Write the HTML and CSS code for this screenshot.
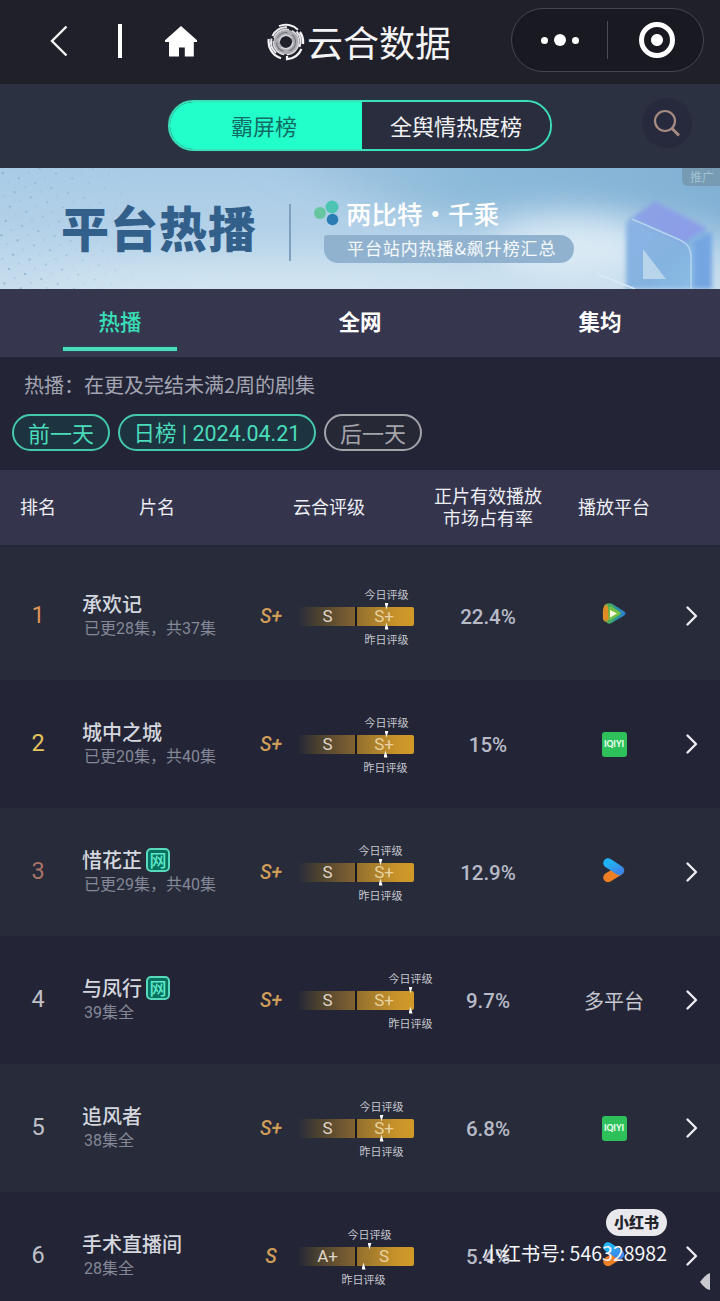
FILE: index.html
```html
<!DOCTYPE html>
<html lang="zh-CN">
<head>
<meta charset="utf-8">
<title>云合数据</title>
<link rel="stylesheet" href="styles.css">
</head>
<body>
<svg class="defs" width="0" height="0">
  <defs>
    <linearGradient id="blueArm" x1="0" y1="0" x2="1" y2="1"><stop offset="0" stop-color="#20b4f5"/><stop offset="1" stop-color="#3c88e8"/></linearGradient>
    <linearGradient id="txEdge" x1="0" y1="0" x2="1" y2="0"><stop offset="0" stop-color="#e99a26"/><stop offset=".25" stop-color="#4fae55"/><stop offset=".6" stop-color="#2a93a0"/><stop offset="1" stop-color="#2b7fd0"/></linearGradient>
    <symbol id="arrow" viewBox="0 0 12 20"><path d="M1.500 1.500 10 10 1.500 18.500" fill="none" stroke="#eeeef2" stroke-width="2.300" stroke-linecap="round" stroke-linejoin="round"/></symbol>
    <symbol id="tencent" viewBox="0 0 26 24">
      <path d="M3 4Q4 1 7.500 1.500Q9 .8 11 1.800L23 9.300Q26 11.500 23 13.700L10 21.300Q7 22.600 5.500 20Q3 20 2 17Q1 10 3 4Z" fill="url(#txEdge)"/>
      <path d="M3 5Q5 2 7 5L8 17Q6 20 3 18Q1 11 3 5Z" fill="#e18b25"/>
      <path d="M8 5Q9.500 3.500 11.500 5L19 10Q20.500 11.500 19 12.800L10 18Q8 18.500 7.500 16Z" fill="#72c043"/>
      <path d="M9 8 16 11.500 9 15.500Z" fill="#fffbe2"/>
    </symbol>
    <symbol id="youku" viewBox="0 0 24 26">
      <path d="M6 20.500 16.500 14" stroke="#ee7f25" stroke-width="9.500" stroke-linecap="round"/>
      <path d="M6 6 17.500 13.500" stroke="url(#blueArm)" stroke-width="9.500" stroke-linecap="round"/>
    </symbol>
  </defs>
</svg>
<main class="page">
  <header class="navbar">
    <svg class="nav-back" width="18" height="32" viewBox="0 0 18 32"><path d="M16.500 1.500 2 16 16.500 30.500" fill="none" stroke="#f4f4f6" stroke-width="2.400"/></svg>
    <span class="nav-rule"></span>
    <svg class="nav-home" width="34" height="32" viewBox="0 0 34 32"><path d="M17 1 33 15.200V17H29.800V31.500H20.800V22.500H15V31.500H5V17H1V15.200Z" fill="#fff"/></svg>
    <div class="brand">
      <svg width="38" height="38" viewBox="0 0 38 38" fill="none">
        <circle cx="19" cy="19" r="9.300" stroke="#aaaab0" stroke-width="6.500"/>
        <circle cx="19" cy="19" r="12.800" stroke="#dedee2" stroke-width="1.400" stroke-dasharray="19 3"/>
        <circle cx="19" cy="19" r="9.500" stroke="#75757d" stroke-width="1.100" stroke-dasharray="12 5"/>
        <circle cx="19" cy="19" r="6.800" stroke="#d5d5d9" stroke-width="1.400" stroke-dasharray="16 6"/>
        <path d="M12 3.200A17.300 17.300 0 0 1 31 6.700" stroke="#f4f4f6" stroke-width="1.900"/>
        <path d="M33 9A17.300 17.300 0 0 1 36 21M34.500 26A17.300 17.300 0 0 1 20 36.200V33M14 35.300A17.300 17.300 0 0 1 1.800 16" stroke="#f4f4f6" stroke-width="2.200"/>
        <path d="M4.500 15.500A14.800 14.800 0 0 0 9 30M29.500 8.500A14.800 14.800 0 0 1 32.500 24M5.500 13A14.800 14.800 0 0 1 20 4.200" stroke="#e8e8ec" stroke-width="2"/>
      </svg>
      <span>云合数据</span>
    </div>
    <div class="capsule">
      <span class="dots"><i></i><i></i><i></i></span>
      <span class="capsule-rule"></span>
      <span class="target"></span>
    </div>
  </header>

  <section class="toolbar">
    <div class="segment"><span class="seg-on">霸屏榜</span><span class="seg-off">全舆情热度榜</span></div>
    <span class="search"><svg width="28" height="28" viewBox="0 0 28 28" fill="none" stroke="#a58b80" stroke-width="2.200"><circle cx="12" cy="12" r="10"/><path d="M19 19.500 26 26.500" stroke-width="3"/></svg></span>
  </section>

  <section class="banner">
    <svg class="banner-art" width="720" height="121" viewBox="0 0 720 121">
      <defs>
        <linearGradient id="sky" x1="0" y1="0" x2="0" y2="1"><stop offset="0" stop-color="#a9cbe6"/><stop offset=".5" stop-color="#b3d1e8"/><stop offset="1" stop-color="#c8deee"/></linearGradient>
        <linearGradient id="dusk" x1="0" y1="0" x2="1" y2="0"><stop offset="0" stop-color="#84b5d5" stop-opacity="0"/><stop offset=".45" stop-color="#84b5d5" stop-opacity=".8"/><stop offset="1" stop-color="#80afd4"/></linearGradient>
        <linearGradient id="cubeTop" x1="0" y1="0" x2="1" y2="1"><stop offset="0" stop-color="#8ba2e4"/><stop offset="1" stop-color="#8b9ce8"/></linearGradient>
        <linearGradient id="cubeFace" x1="0" y1="0" x2="1" y2="1"><stop offset="0" stop-color="#8db3e4"/><stop offset=".6" stop-color="#84b3e0"/><stop offset="1" stop-color="#8cc0e6"/></linearGradient>
        <filter id="soft" x="-30%" y="-80%" width="160%" height="260%"><feGaussianBlur stdDeviation="16"/></filter>
        <filter id="edge"><feGaussianBlur stdDeviation="2"/></filter>
        <pattern id="specks" width="17" height="15" patternUnits="userSpaceOnUse" patternTransform="rotate(17)"><circle cx="4" cy="4" r="1" fill="#7fa8ca"/><circle cx="12" cy="11" r=".8" fill="#90b5d4"/></pattern>
        <linearGradient id="fade"><stop offset="0" stop-color="#fff"/><stop offset="1" stop-color="#fff" stop-opacity="0"/></linearGradient>
        <mask id="speckMask"><rect width="150" height="121" fill="url(#fade)"/></mask>
      </defs>
      <rect width="720" height="121" fill="url(#sky)"/>
      <path d="M230 -30H760V75Q600 25 500 45Q390 60 230 -30Z" fill="url(#dusk)" filter="url(#soft)"/>
      <ellipse cx="570" cy="82" rx="80" ry="28" fill="#dcebf5" filter="url(#soft)"/>
      <ellipse cx="280" cy="118" rx="240" ry="18" fill="#d2e5f1" filter="url(#soft)"/>
      <rect width="150" height="121" fill="url(#specks)" mask="url(#speckMask)"/>
      <g filter="url(#edge)">
        <path d="M630 50 655 34 707 61V121H626V55Z" fill="url(#cubeFace)"/>
        <path d="M632 50 655 33 707 60 684 75Z" fill="url(#cubeTop)"/>
        <path d="M694 74 712 63V121H694Z" fill="#76a6e2"/>
      </g>
      <path d="M632 51 680 72Q691 77 691 88V121" fill="none" stroke="#b4d4ef" stroke-width="1.500"/>
      <path d="M643 81 666 111H643Z" fill="#b7d4eb"/>
      <path d="M598 106 635 121" stroke="#d9ebf5" stroke-width="1.500"/>
    </svg>
    <strong class="banner-title">平台热播</strong>
    <span class="banner-rule"></span>
    <div class="banner-side">
      <div class="banner-brand">
        <svg width="25" height="26" viewBox="0 0 25 26"><circle cx="18" cy="7" r="6.500" fill="#4dc5b2"/><circle cx="6" cy="13" r="6" fill="#65c6a0"/><circle cx="18.500" cy="19.500" r="5.800" fill="#2a7bb4"/></svg>
        <span>两比特·千乘</span>
      </div>
      <span class="banner-sub">平台站内热播&amp;飙升榜汇总</span>
    </div>
    <span class="ad-tag">推广</span>
  </section>

  <nav class="tabs"><span class="tab tab-on">热播</span><span class="tab">全网</span><span class="tab">集均</span></nav>

  <section class="filters">
    <p class="hint">热播：在更及完结未满2周的剧集</p>
    <div class="days"><span class="pill pill-day">前一天</span><span class="pill pill-date">日榜 | 2024.04.21</span><span class="pill pill-day pill-off">后一天</span></div>
  </section>

  <div class="thead"><span>排名</span><span>片名</span><span>云合评级</span><span>正片有效播放<br>市场占有率</span><span>播放平台</span></div>

  <section class="rows">
    <article class="row">
      <span class="rank rank-1">1</span>
      <div class="show"><div class="name">承欢记</div><div class="sub">已更28集，共37集</div></div>
      <span class="grade">S+</span>
      <div class="bar"><span class="low">S</span><span class="high">S+</span><span class="mark today" style="left:89.500px">今日评级</span><span class="mark prev" style="left:89.500px">昨日评级</span></div>
      <span class="share">22.4%</span>
      <span class="platform"><svg width="26" height="24"><use href="#tencent"/></svg></span>
      <svg class="go" width="12" height="20"><use href="#arrow"/></svg>
    </article>
    <article class="row">
      <span class="rank rank-2">2</span>
      <div class="show"><div class="name">城中之城</div><div class="sub">已更20集，共40集</div></div>
      <span class="grade">S+</span>
      <div class="bar"><span class="low">S</span><span class="high">S+</span><span class="mark today" style="left:89.500px">今日评级</span><span class="mark prev" style="left:88.500px">昨日评级</span></div>
      <span class="share">15%</span>
      <span class="platform"><b class="iqiyi">IQIYI</b></span>
      <svg class="go" width="12" height="20"><use href="#arrow"/></svg>
    </article>
    <article class="row">
      <span class="rank rank-3">3</span>
      <div class="show"><div class="name">惜花芷<em>网</em></div><div class="sub">已更29集，共40集</div></div>
      <span class="grade">S+</span>
      <div class="bar"><span class="low">S</span><span class="high">S+</span><span class="mark today" style="left:83.500px">今日评级</span><span class="mark prev" style="left:83.500px">昨日评级</span></div>
      <span class="share">12.9%</span>
      <span class="platform"><svg width="24" height="26"><use href="#youku"/></svg></span>
      <svg class="go" width="12" height="20"><use href="#arrow"/></svg>
    </article>
    <article class="row">
      <span class="rank">4</span>
      <div class="show"><div class="name">与凤行<em>网</em></div><div class="sub">39集全</div></div>
      <span class="grade">S+</span>
      <div class="bar"><span class="low">S</span><span class="high">S+</span><span class="mark today" style="left:113.500px">今日评级</span><span class="mark prev" style="left:113.500px">昨日评级</span></div>
      <span class="share">9.7%</span>
      <span class="platform">多平台</span>
      <svg class="go" width="12" height="20"><use href="#arrow"/></svg>
    </article>
    <article class="row">
      <span class="rank">5</span>
      <div class="show"><div class="name">追风者</div><div class="sub">38集全</div></div>
      <span class="grade">S+</span>
      <div class="bar"><span class="low">S</span><span class="high">S+</span><span class="mark today" style="left:84.500px">今日评级</span><span class="mark prev" style="left:84.500px">昨日评级</span></div>
      <span class="share">6.8%</span>
      <span class="platform"><b class="iqiyi">IQIYI</b></span>
      <svg class="go" width="12" height="20"><use href="#arrow"/></svg>
    </article>
    <article class="row">
      <span class="rank">6</span>
      <div class="show"><div class="name">手术直播间</div><div class="sub">28集全</div></div>
      <span class="grade">S</span>
      <div class="bar"><span class="low">A+</span><span class="high">S</span><span class="mark today" style="left:72.500px">今日评级</span><span class="mark prev" style="left:66.500px">昨日评级</span></div>
      <span class="share">5.4%</span>
      <span class="platform"><svg width="24" height="26"><use href="#youku"/></svg></span>
      <svg class="go" width="12" height="20"><use href="#arrow"/></svg>
    </article>
  </section>

  <aside class="watermark"><b>小红书</b><span>小红书号: 546328982</span></aside>
  <svg class="corner" width="10" height="17" viewBox="0 0 10 17"><path d="M10 0V17Q5 16 0 9Q5 2 10 0Z" fill="#c9c9cf"/></svg>
</main>
</body>
</html>
```
FILE: styles.css
```css
* { box-sizing: border-box; }
body { margin: 0; background: #232536; font-family: "Noto Sans CJK SC", sans-serif; color: #d6d7df; }
.defs { position: absolute; }
.page { position: relative; width: 720px; height: 1301px; overflow: hidden; }

.navbar { display: flex; align-items: flex-start; height: 84px; background: #20202a; }
.nav-back { margin: 25px 0 0 50px; }
.nav-rule { width: 4px; height: 34px; margin: 24px 0 0 50px; background: #fff; }
.nav-home { margin: 25px 0 0 42px; }
.brand { display: flex; align-items: center; gap: 2px; height: 60px; margin: 11px 0 0 69px; font-size: 36px; color: #f4f4f6; }
.brand svg { margin-top: 1px; }
.brand span { width: 143px; white-space: nowrap; line-height: 60px; }
.capsule { display: flex; align-items: center; width: 193px; height: 64px; margin: 8px 0 0 61px; border: 1px solid #454650; border-radius: 32px; background: #181921; }
.dots { display: flex; align-items: center; gap: 6px; margin-left: 29px; }
.dots i { width: 7px; height: 7px; border-radius: 50%; background: #fff; }
.dots i:nth-child(2) { width: 12px; height: 12px; }
.capsule-rule { width: 1px; height: 38px; margin-left: 28px; background: #4b4c55; }
.target { width: 36px; height: 36px; margin-left: 31px; border: 5px solid #fff; border-radius: 50%; background: radial-gradient(circle, #fff 5.5px, transparent 6.5px); }

.toolbar { display: flex; align-items: flex-start; height: 84px; background: #2c3142; }
.segment { display: flex; width: 384px; height: 51px; margin: 16px 0 0 168px; border: 2px solid #3cdfb8; border-radius: 26px; overflow: hidden; font-size: 22px; line-height: 46px; text-align: center; box-shadow: 0 0 2px #125a50; }
.seg-on { width: 192px; padding-right: 4px; background: #22ffcb; color: #126c64; }
.seg-off { flex: 1; color: #f1f2f5; background: #292d3d; }
.search { display: flex; align-items: center; justify-content: center; width: 50px; height: 50px; margin: 14px 0 0 90px; border-radius: 50%; background: #262a3c; }

.banner { position: relative; display: flex; height: 121px; overflow: hidden; background: #b4d1e7; }
.banner-art { position: absolute; inset: 0; }
.banner-title { position: relative; width: 200px; margin: 28px 0 0 61px; font-size: 48px; line-height: 60px; letter-spacing: 1px; font-weight: 900; color: #335f8b; white-space: nowrap; }
.banner-rule { position: relative; width: 2px; height: 57px; margin: 36px 0 0 28px; background: #7e9fbd; }
.banner-side { position: relative; margin: 28px 0 0 23px; }
.banner-brand { display: flex; align-items: center; gap: 7px; height: 33px; font-size: 25.5px; line-height: 32px; font-weight: 500; color: #fff; white-space: nowrap; }
.banner-sub { display: block; width: 250px; height: 28px; margin: 6px 0 0 10px; padding-left: 23px; border-radius: 3px 14px 14px 14px; background: #91b2ce; color: #f6fafc; font-size: 17px; line-height: 26px; letter-spacing: .9px; white-space: nowrap; }
.ad-tag { position: absolute; right: 0; top: 0; width: 38px; height: 18px; padding-left: 8px; border-radius: 0 0 0 6px; background: #779bb3; color: #a2c2d2; font-size: 12px; line-height: 18px; }

.tabs { display: grid; grid-template-columns: repeat(3, 1fr); height: 68px; background: #37364f; }
.tab { display: flex; flex-direction: column; align-items: center; color: #fff; font-size: 21.5px; font-weight: 700; line-height: 64px; }
.tab-on { color: #38dfb6; font-weight: 500; }
.tab-on::after { content: ""; width: 114px; height: 4px; margin-top: -6px; background: #4bdcbd; box-shadow: 0 0 2px #00735d; }

.filters { height: 113px; padding: 14px 0 0 12px; background: #232536; }
.hint { margin: 0 0 0 12px; font-size: 20px; line-height: 28px; color: #a3a4b1; }
.days { display: flex; gap: 8px; margin-top: 15px; }
.pill { height: 37px; border: 2px solid #43c8aa; border-radius: 19px; background: #1d3440; color: #4bdcbb; text-align: center; font-size: 22px; line-height: 32px; white-space: nowrap; }
.pill-day { width: 98px; }
.pill-date { width: 198px; font-family: Roboto, "Noto Sans CJK SC", sans-serif; font-size: 21.5px; line-height: 35px; }
.pill-off { border-color: #a3a3aa; background: #272836; color: #a5a5ac; }

.thead { display: grid; grid-template-columns: 76px 162px 182px 136px 116px; align-items: center; height: 77px; padding-bottom: 3px; background: #34354d; border-bottom: 2px solid #222838; color: #eeeef5; font-size: 18px; line-height: 22px; text-align: center; }

.rows { margin-top: 5px; }
.row { display: grid; grid-template-columns: 76px 169px 52px 117px 148px 104px 50px; align-items: center; height: 128px; background: #232536; }
.row:nth-child(odd) { background: #272b3a; }
.row:first-child { box-shadow: 0 -5px #272b3a; }
.rank, .grade, .share, .low, .high, .sub { font-family: Roboto, "Noto Sans CJK SC", sans-serif; }
.rank { text-align: center; font-size: 23.5px; line-height: 30px; padding-bottom: 3px; color: #bfc0c8; }
.rank-1 { color: #dd9257; }
.rank-2 { color: #e5c45b; }
.rank-3 { color: #a87466; }
.show { padding-left: 6px; }
.name { display: flex; align-items: center; gap: 4px; height: 26px; font-size: 20px; line-height: 26px; font-weight: 500; color: #d5d7df; }
.name em { width: 24px; height: 24px; border: 2px solid #57d9bc; border-radius: 5px; background: #08705f; color: #5de8c8; font-size: 17px; font-style: normal; line-height: 19px; text-align: center; }
.sub { padding-left: 2px; font-size: 16px; line-height: 24px; color: #858896; }
.grade { padding-top: 2px; text-align: center; font-size: 19.5px; line-height: 24px; font-style: italic; font-weight: 500; color: #cf9d59; }
.bar { position: relative; display: flex; gap: 2px; height: 19px; background: linear-gradient(90deg, transparent 50%, #17171d 0); color: #e0d6c8; font-size: 17px; line-height: 19px; text-align: center; border-radius: 2px; }
.low { width: 58px; padding-left: 3px; background: linear-gradient(90deg, transparent, #49402f 35%, #826332); }
.high { width: 57px; padding-right: 3px; border-radius: 0 2px 2px 0; background: linear-gradient(90deg, #93702d, #c8932a 70%, #d19a28); color: #e8d2a2; }
.mark { position: absolute; width: 60px; margin-left: -30px; color: #c6c7ce; font-size: 11px; line-height: 16px; white-space: nowrap; }
.mark::after { content: ""; position: absolute; left: 28px; width: 4px; height: 7px; background: #fff; }
.today { top: -21px; }
.today::after { top: 17px; clip-path: polygon(0 0, 100% 0, 50% 100%); }
.prev { top: 24px; }
.prev::after { top: -8px; clip-path: polygon(50% 0, 100% 100%, 0 100%); }
.share { padding-top: 1px; text-align: center; font-size: 20.5px; line-height: 24px; font-weight: 500; color: #b8bbc7; }
.platform { display: flex; align-items: center; justify-content: center; font-size: 20px; color: #c5c6cf; }
.platform svg { margin-top: -4px; }
.iqiyi { width: 25px; height: 25px; border-radius: 3px; background: #2ec05b; color: #e6ffec; font-family: Lato, sans-serif; font-size: 8.5px; font-weight: 900; line-height: 24px; text-align: center; }
.go { justify-self: center; margin-left: 2px; }

.watermark { position: absolute; right: 53px; top: 1209px; display: flex; flex-direction: column; align-items: flex-end; color: #f5f5f8; font-size: 19.5px; line-height: 34px; white-space: nowrap; }
.watermark b { width: 61px; height: 27px; border-radius: 14px; background: #e9e9ed; color: #23232c; font-size: 15px; font-weight: 900; line-height: 26px; text-align: center; }
.corner { position: absolute; right: 10px; top: 1273px; }
```
